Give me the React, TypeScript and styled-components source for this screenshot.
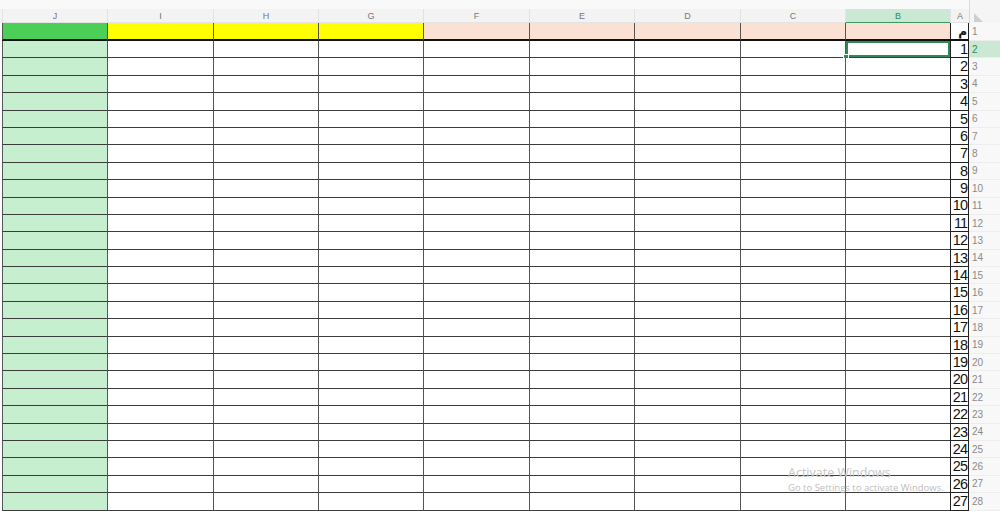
import React from "react";
import styled, { createGlobalStyle } from "styled-components";

const GlobalStyle = createGlobalStyle`
  html, body {
    margin: 0;
    padding: 0;
    background: #fff;
    font-family: "Liberation Sans", Arial, sans-serif;
  }
`;

const COLS = "105px 106px 105px 105px 106px 105px 106px 105px 105px 19px 31px";
const LETTERS = ["J", "I", "H", "G", "F", "E", "D", "C", "B"];
const ROW_COUNT = 27;

const Sheet = styled.div`
  position: relative;
  width: 1000px;
  height: 511px;
  overflow: hidden;
  background: #fff;
`;

const TopStrip = styled.div`
  display: grid;
  grid-template-columns: 1fr 31px;
  height: 9px;
  background: #f9f9f9;
`;

const CornerTop = styled.div`
  border-left: 1px solid #dcdcdc;
  background: #f5f5f5;
`;

const LetterRow = styled.div`
  display: grid;
  grid-template-columns: ${COLS};
  padding-left: 2px;
  height: 14px;
  background: #f3f3f3;
`;

const Letter = styled.div<{ $active?: boolean }>`
  display: flex;
  align-items: center;
  justify-content: center;
  font-size: 9px;
  color: ${(p) => (p.$active ? "#2f8a55" : "#777")};
  background: ${(p) => (p.$active ? "#cbe8d5" : "transparent")};
  border-left: 1px solid #e2e2e2;
  border-bottom: ${(p) => (p.$active ? "1px solid #3a9a62" : "1px solid #e4e4e4")};
  box-sizing: border-box;
`;

const Corner = styled.div`
  border-left: 1px solid #d8d8d8;
  background: #f5f5f5;
  display: flex;
  align-items: flex-end;
  padding: 0 0 1px 4px;
  box-sizing: border-box;
`;

const Row = styled.div<{ $head?: boolean }>`
  display: grid;
  grid-template-columns: ${COLS};
  padding-left: 2px;
  height: ${(p) => (p.$head ? "18px" : "17.4px")};
`;

const Cell = styled.div<{ $bg?: string; $head?: boolean; $selected?: boolean }>`
  position: relative;
  box-sizing: border-box;
  background: ${(p) => p.$bg || "#fff"};
  border-left: 1px solid #555;
  border-bottom: ${(p) => (p.$head ? "2px solid #111" : "1px solid #3c3c3c")};
  box-shadow: ${(p) => (p.$selected ? "inset 0 0 0 2px #2d8a55" : "none")};
`;

const FillHandle = styled.span`
  position: absolute;
  left: -3px;
  bottom: -3px;
  width: 4px;
  height: 4px;
  background: #2d8a55;
  border: 1px solid #fff;
`;

const NumCell = styled.div<{ $head?: boolean }>`
  box-sizing: border-box;
  background: #fff;
  border-left: 1px solid #222;
  border-right: 1px solid #222;
  border-bottom: ${(p) => (p.$head ? "2px solid #111" : "1px solid #222")};
  display: flex;
  align-items: center;
  justify-content: flex-end;
  padding-right: 1px;
  font-size: ${(p) => (p.$head ? "12px" : "14.5px")};
  font-weight: ${(p) => (p.$head ? 700 : 400)};
  letter-spacing: ${(p) => (p.$head ? "0" : "-1px")};
  color: #111;
  line-height: 1;
  overflow: hidden;
  font-family: "Liberation Sans", "DejaVu Sans", sans-serif;
`;

const RowHead = styled.div<{ $active?: boolean }>`
  box-sizing: border-box;
  background: ${(p) => (p.$active ? "#cbe8d5" : "#f8f8f8")};
  border-bottom: 1px solid #ededed;
  display: flex;
  align-items: center;
  padding-left: 3px;
  font-size: 10px;
  color: ${(p) => (p.$active ? "#2f8a55" : "#8a8a8a")};
`;

const Watermark = styled.div`
  position: absolute;
  left: 788px;
  top: 465px;
  color: #c4c4c4;
  font-family: "Open Sans", "Liberation Sans", sans-serif;
  pointer-events: none;
`;

const WmTitle = styled.div`
  font-size: 12.5px;
  line-height: 16px;
`;

const WmSub = styled.div`
  font-size: 9.5px;
  line-height: 14px;
  color: #bdbdbd;
`;

function headColor(i: number) {
  if (i === 0) return "#4ccf57";
  if (i <= 3) return "#ffff00";
  return "#fbe0d4";
}

export default function App() {
  return (
    <>
      <GlobalStyle />
      <Sheet>
        <TopStrip>
          <div />
          <CornerTop />
        </TopStrip>
        <LetterRow>
          {LETTERS.map((l) => (
            <Letter key={l} $active={l === "B"}>
              {l}
            </Letter>
          ))}
          <Letter>A</Letter>
          <Corner>
            <svg width="9" height="9" viewBox="0 0 9 9">
              <polygon points="0,0 0,9 9,9" fill="#cfcfcf" />
            </svg>
          </Corner>
        </LetterRow>

        <Row $head>
          {LETTERS.map((l, i) => (
            <Cell key={l} $head $bg={headColor(i)} />
          ))}
          <NumCell $head>م</NumCell>
          <RowHead>1</RowHead>
        </Row>

        {Array.from({ length: ROW_COUNT }, (_, r) => {
          return (
            <Row key={r}>
              {LETTERS.map((l, i) => {
                const selected = r === 0 && l === "B";
                return (
                  <Cell
                    key={l}
                    $bg={i === 0 ? "#c6efcf" : undefined}
                    $selected={selected}
                  >
                    {selected && <FillHandle />}
                  </Cell>
                );
              })}
              <NumCell>{r + 1}</NumCell>
              <RowHead $active={r === 0}>{r + 2}</RowHead>
            </Row>
          );
        })}

        <Watermark>
          <WmTitle>Activate Windows</WmTitle>
          <WmSub>Go to Settings to activate Windows.</WmSub>
        </Watermark>
      </Sheet>
    </>
  );
}
